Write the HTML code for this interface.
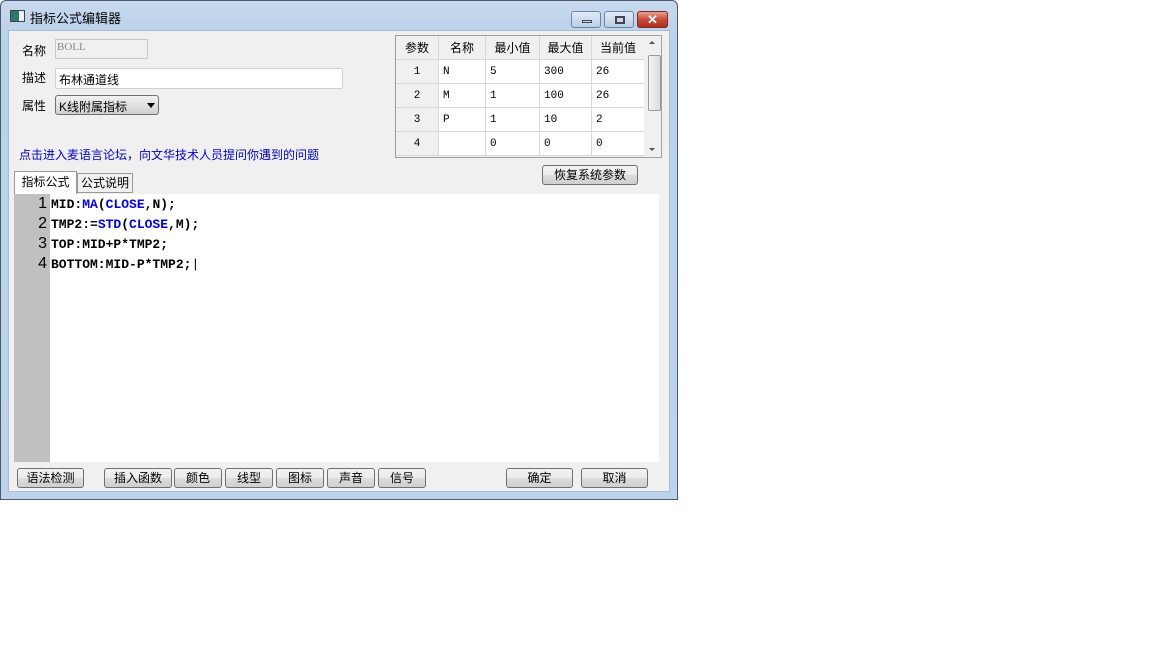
<!DOCTYPE html>
<html><head><meta charset="utf-8"><style>
*{box-sizing:border-box;margin:0;padding:0}
body{width:1152px;height:648px;background:#fff;position:relative;overflow:hidden;font-family:"Liberation Sans","Noto Sans CJK SC","WenQuanYi Zen Hei",sans-serif;font-size:12px;color:#000}
.a{position:absolute}
.win{left:0;top:0;width:678px;height:500px;border:1px solid #4a5a6a;border-radius:6px 6px 0 0;background:linear-gradient(#c7d9ee,#b9d1ea 40px,#bcd3eb);}
.client{left:8px;top:30px;width:662px;height:462px;background:#f0f0f0;border:1px solid #a8bcd4}
.btn{position:absolute;height:20px;border:1px solid #707070;border-radius:3px;background:linear-gradient(#f2f2f2,#ebebeb 50%,#dddddd 51%,#cfcfcf);text-align:center;line-height:18px;font-size:12px}
table{border-collapse:collapse}
td{border:1px solid #d8d8d8;height:24px;font-size:11px;font-family:"Liberation Mono","Noto Sans CJK SC",monospace;padding-left:4px;background:#fff}
.code{font-family:"Liberation Mono",monospace;font-weight:bold;font-size:13px;line-height:20px}
.k{color:#0000ff}
</style></head><body>
<div class="a win"></div>
<div class="a" style="left:10px;top:10px;width:15px;height:12px;border:1px solid #444;background:linear-gradient(90deg,#2a7a6a 60%,#eee 60%)"></div>
<div class="a" style="left:30px;top:8px;font-size:13px">指标公式编辑器</div>
<div class="a" style="left:571px;top:11px;width:30px;height:17px;border:1px solid #6d84a0;border-radius:3px;background:linear-gradient(#e0ebf7,#bccee4)"><div class="a" style="left:10px;top:8px;width:10px;height:3px;border:1px solid #445"></div></div>
<div class="a" style="left:604px;top:11px;width:30px;height:17px;border:1px solid #6d84a0;border-radius:3px;background:linear-gradient(#e0ebf7,#bccee4)"><div class="a" style="left:10px;top:4px;width:10px;height:8px;border:2px solid #445"></div></div>
<div class="a" style="left:637px;top:11px;width:31px;height:17px;border:1px solid #7a2a20;border-radius:3px;background:linear-gradient(#e8a090,#c84a38 50%,#b03020);color:#fff;font-weight:bold;text-align:center;line-height:15px;font-size:13px">✕</div>
<div class="a client"></div>

<div class="a" style="left:22px;top:42px">名称</div>
<div class="a" style="left:55px;top:39px;width:93px;height:20px;border:1px solid #c8c8c8;background:#f0f0f0;color:#888;font-family:'Liberation Serif',serif;font-size:11px;padding:1px 1px">BOLL</div>
<div class="a" style="left:22px;top:69px">描述</div>
<div class="a" style="left:55px;top:68px;width:288px;height:21px;border:1px solid #d0d0d0;border-radius:2px;background:#fff;padding:2px 3px">布林通道线</div>
<div class="a" style="left:22px;top:97px">属性</div>
<div class="a" style="left:55px;top:95px;width:104px;height:20px;border:1px solid #707070;border-radius:3px;background:linear-gradient(#f2f2f2,#e0e0e0 50%,#d0d0d0);padding:2px 3px">K线附属指标<span class="a" style="left:91px;top:7px;border:4px solid transparent;border-top:5px solid #000"></span></div>
<div class="a" style="left:19px;top:146px;color:#0000cc">点击进入麦语言论坛，向文华技术人员提问你遇到的问题</div>

<div class="a" style="left:395px;top:35px;width:267px;height:123px;border:1px solid #a0a0a0;background:#f0f0f0;overflow:hidden">
<table class="a" style="left:-1px;top:-1px">
<tr><td style="width:43px;background:#f0f0f0;font-family:'Liberation Sans','Noto Sans CJK SC',sans-serif;font-size:12px;text-align:center;padding:0">参数</td><td style="width:47px;background:#f0f0f0;font-family:'Liberation Sans','Noto Sans CJK SC',sans-serif;font-size:12px;text-align:center;padding:0">名称</td><td style="width:54px;background:#f0f0f0;font-family:'Liberation Sans','Noto Sans CJK SC',sans-serif;font-size:12px;text-align:center;padding:0">最小值</td><td style="width:52px;background:#f0f0f0;font-family:'Liberation Sans','Noto Sans CJK SC',sans-serif;font-size:12px;text-align:center;padding:0">最大值</td><td style="width:53px;background:#f0f0f0;font-family:'Liberation Sans','Noto Sans CJK SC',sans-serif;font-size:12px;text-align:center;padding:0">当前值</td></tr>
<tr><td style="background:#f0f0f0;text-align:center;padding:0">1</td><td>N</td><td>5</td><td>300</td><td>26</td></tr>
<tr><td style="background:#f0f0f0;text-align:center;padding:0">2</td><td>M</td><td>1</td><td>100</td><td>26</td></tr>
<tr><td style="background:#f0f0f0;text-align:center;padding:0">3</td><td>P</td><td>1</td><td>10</td><td>2</td></tr>
<tr><td style="background:#f0f0f0;text-align:center;padding:0">4</td><td></td><td>0</td><td>0</td><td>0</td></tr>
</table>
<div class="a" style="left:248px;top:0;width:18px;height:122px;background:#f0f0f0"></div>
<div class="a" style="left:253px;top:5px;border:3px solid transparent;border-bottom:3px solid #555;border-top:0"></div>
<div class="a" style="left:252px;top:19px;width:13px;height:56px;border:1px solid #999;border-radius:2px;background:linear-gradient(90deg,#f4f4f4,#dcdcdc)"></div>
<div class="a" style="left:253px;top:112px;border:3px solid transparent;border-top:3px solid #555;border-bottom:0"></div>
</div>
<div class="btn" style="left:542px;top:165px;width:96px">恢复系统参数</div>

<div class="a" style="left:14px;top:171px;width:63px;height:24px;border:1px solid #999;border-bottom:none;background:#fff;text-align:center;line-height:20px">指标公式</div>
<div class="a" style="left:77px;top:173px;width:56px;height:20px;border:1px solid #999;background:#f0f0f0;text-align:center;line-height:18px">公式说明</div>
<div class="a" style="left:14px;top:194px;width:645px;height:268px;background:#fff"></div>
<div class="a" style="left:14px;top:194px;width:36px;height:268px;background:#c0c0c0"></div>
<div class="a" style="left:14px;top:194px;width:33px;text-align:right;font-size:16px;line-height:20px">1<br>2<br>3<br>4</div>
<div class="a code" style="left:51px;top:195px">MID:<span class="k">MA</span>(<span class="k">CLOSE</span>,N);<br>TMP2:=<span class="k">STD</span>(<span class="k">CLOSE</span>,M);<br>TOP:MID+P*TMP2;<br>BOTTOM:MID-P*TMP2;<span style="font-weight:normal">|</span></div>

<div class="btn" style="left:17px;top:468px;width:67px">语法检测</div>
<div class="btn" style="left:104px;top:468px;width:68px">插入函数</div>
<div class="btn" style="left:174px;top:468px;width:48px">颜色</div>
<div class="btn" style="left:225px;top:468px;width:48px">线型</div>
<div class="btn" style="left:276px;top:468px;width:48px">图标</div>
<div class="btn" style="left:327px;top:468px;width:48px">声音</div>
<div class="btn" style="left:378px;top:468px;width:48px">信号</div>
<div class="btn" style="left:506px;top:468px;width:67px">确定</div>
<div class="btn" style="left:581px;top:468px;width:67px">取消</div>
</body></html>
